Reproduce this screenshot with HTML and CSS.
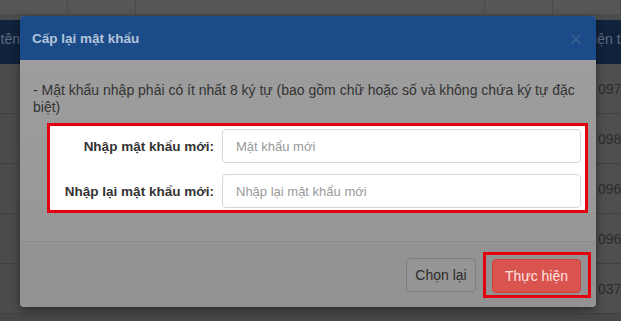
FILE: index.html
```html
<!DOCTYPE html>
<html lang="vi">
<head>
    <meta charset="UTF-8">
    <meta name="viewport" content="width=device-width, initial-scale=1.0">
    <title>Cấp lại mật khẩu</title>
    <link rel="stylesheet" href="styles.css">
</head>
<body>
    <!-- Page behind the dialog (dimmed) -->
    <div class="page">
        <div class="toolbar">
            <span class="tool-cell"></span>
            <span class="tool-cell"></span>
            <span class="tool-cell grow"></span>
            <span class="tool-cell"></span>
            <span class="tool-cell"></span>
        </div>
        <div class="grid">
            <div class="th first">Họ tên</div>
            <div class="th"></div>
            <div class="th last">Điện thoại</div>

            <div class="td"></div><div class="td"></div><div class="td last">0978123456</div>
            <div class="td"></div><div class="td"></div><div class="td last">0986234567</div>
            <div class="td"></div><div class="td"></div><div class="td last">0965345678</div>
            <div class="td"></div><div class="td"></div><div class="td last">0962456789</div>
            <div class="td"></div><div class="td"></div><div class="td last">0372567890</div>
        </div>
    </div>

    <!-- Dialog -->
    <div class="modal">
        <div class="modal-header">
            <span class="modal-title">Cấp lại mật khẩu</span>
            <span class="close">×</span>
        </div>
        <div class="modal-body">
            <p class="note">- Mật khẩu nhập phải có ít nhất 8 ký tự (bao gồm chữ hoặc số và không chứa ký tự đặc biệt)</p>
            <div class="highlight fields">
                <label for="newPass">Nhập mật khẩu mới:</label>
                <input type="password" id="newPass" placeholder="Mật khẩu mới">
                <label for="rePass">Nhập lại mật khẩu mới:</label>
                <input type="password" id="rePass" placeholder="Nhập lại mật khẩu mới">
            </div>
        </div>
        <div class="modal-footer">
            <button class="btn btn-default">Chọn lại</button>
            <div class="highlight submit-wrap">
                <button class="btn btn-danger">Thực hiện</button>
            </div>
        </div>
    </div>
</body>
</html>
```

FILE: styles.css
```css
* {
    box-sizing: border-box;
}

body {
    margin: 0;
    width: 621px;
    height: 321px;
    overflow: hidden;
    background: #474747;
    font-family: "Liberation Sans", Arial, sans-serif;
    color: #333;
}

/* ---------- dimmed page ---------- */
.page {
    width: 621px;
}

.toolbar {
    display: flex;
    height: 20px;
    background: #565656;
    border-bottom: 6px solid #4c4c4c;
}

.tool-cell {
    border-right: 1px solid #4a4a4a;
    width: 68px;
}

.tool-cell.grow {
    flex: 1;
}

.grid {
    display: grid;
    grid-template-columns: 20px 1fr 40px;
    grid-template-rows: 44px;
    grid-auto-rows: 50px;
    font-size: 14px;
}

.th {
    background: #10233d;
    color: #5e6c7d;
    display: flex;
    align-items: center;
    padding-bottom: 6px;
    white-space: nowrap;
    overflow: hidden;
}

.th.first {
    justify-content: flex-end;
}

.th.last {
    text-indent: 3px;
}

.td {
    background: #4b4b4b;
    border-bottom: 1px solid #414141;
    display: flex;
    align-items: center;
    white-space: nowrap;
    overflow: hidden;
    color: #2c2c2c;
}

.td.last {
    padding-left: 17px;
    background: #4f4f4f;
}

/* ---------- dialog ---------- */
.modal {
    position: absolute;
    left: 20px;
    top: 16px;
    width: 576px;
    height: 291px;
    border-radius: 4px;
    background: #9a9a9a;
    box-shadow: 0 3px 9px rgba(0, 0, 0, 0.45);
    display: flex;
    flex-direction: column;
    overflow: hidden;
}

.modal-header {
    height: 44px;
    flex-shrink: 0;
    background: #1c4b89;
    display: flex;
    align-items: center;
    justify-content: space-between;
    padding: 0 14px 0 12px;
}

.modal-title {
    color: #b3c5da;
    font-weight: bold;
    font-size: 13.5px;
}

.close {
    color: #3e618f;
    font-size: 21px;
    line-height: 1;
}

.modal-body {
    flex: 1;
    padding: 22px 8px 0 13px;
    border-bottom: 1px solid #8b8b8b;
    background: linear-gradient(#9d9d9d, #979797);
}

.note {
    margin: 0;
    font-size: 14px;
    line-height: 17px;
    color: #333;
}

.highlight {
    border: 3px solid #e4000f;
}

.fields {
    margin: 7px 0 0 14px;
    background: #fff;
    display: grid;
    grid-template-columns: 164px 1fr;
    column-gap: 8px;
    row-gap: 11px;
    align-items: center;
    padding: 3px 4px 2px 0;
}

.fields label {
    text-align: right;
    font-weight: bold;
    font-size: 13.5px;
    color: #333;
}

.fields input {
    height: 34px;
    border: 1px solid #d6d6d6;
    border-radius: 4px;
    padding: 0 13px;
    font-family: inherit;
    font-size: 13px;
    color: #555;
}

.fields input::placeholder {
    color: #9a9a9a;
}

.modal-footer {
    height: 65px;
    flex-shrink: 0;
    display: flex;
    align-items: center;
    justify-content: flex-end;
    gap: 7px;
    padding: 0 5px 0 0;
    background: #939393;
}

.btn {
    height: 34px;
    border-radius: 4px;
    font-family: inherit;
    font-size: 14px;
    padding: 0;
    white-space: nowrap;
    cursor: pointer;
}

.btn-default {
    width: 70px;
    background: #959595;
    border: 1px solid #7e7e7e;
    color: #2c2c2c;
}

.submit-wrap {
    padding: 4px 7px 2px 6px;
    margin-top: 1px;
}

.btn-danger {
    width: 89px;
    background: #d9534f;
    border: 1px solid #c8453f;
    color: #fde3e0;
    display: block;
}
```
